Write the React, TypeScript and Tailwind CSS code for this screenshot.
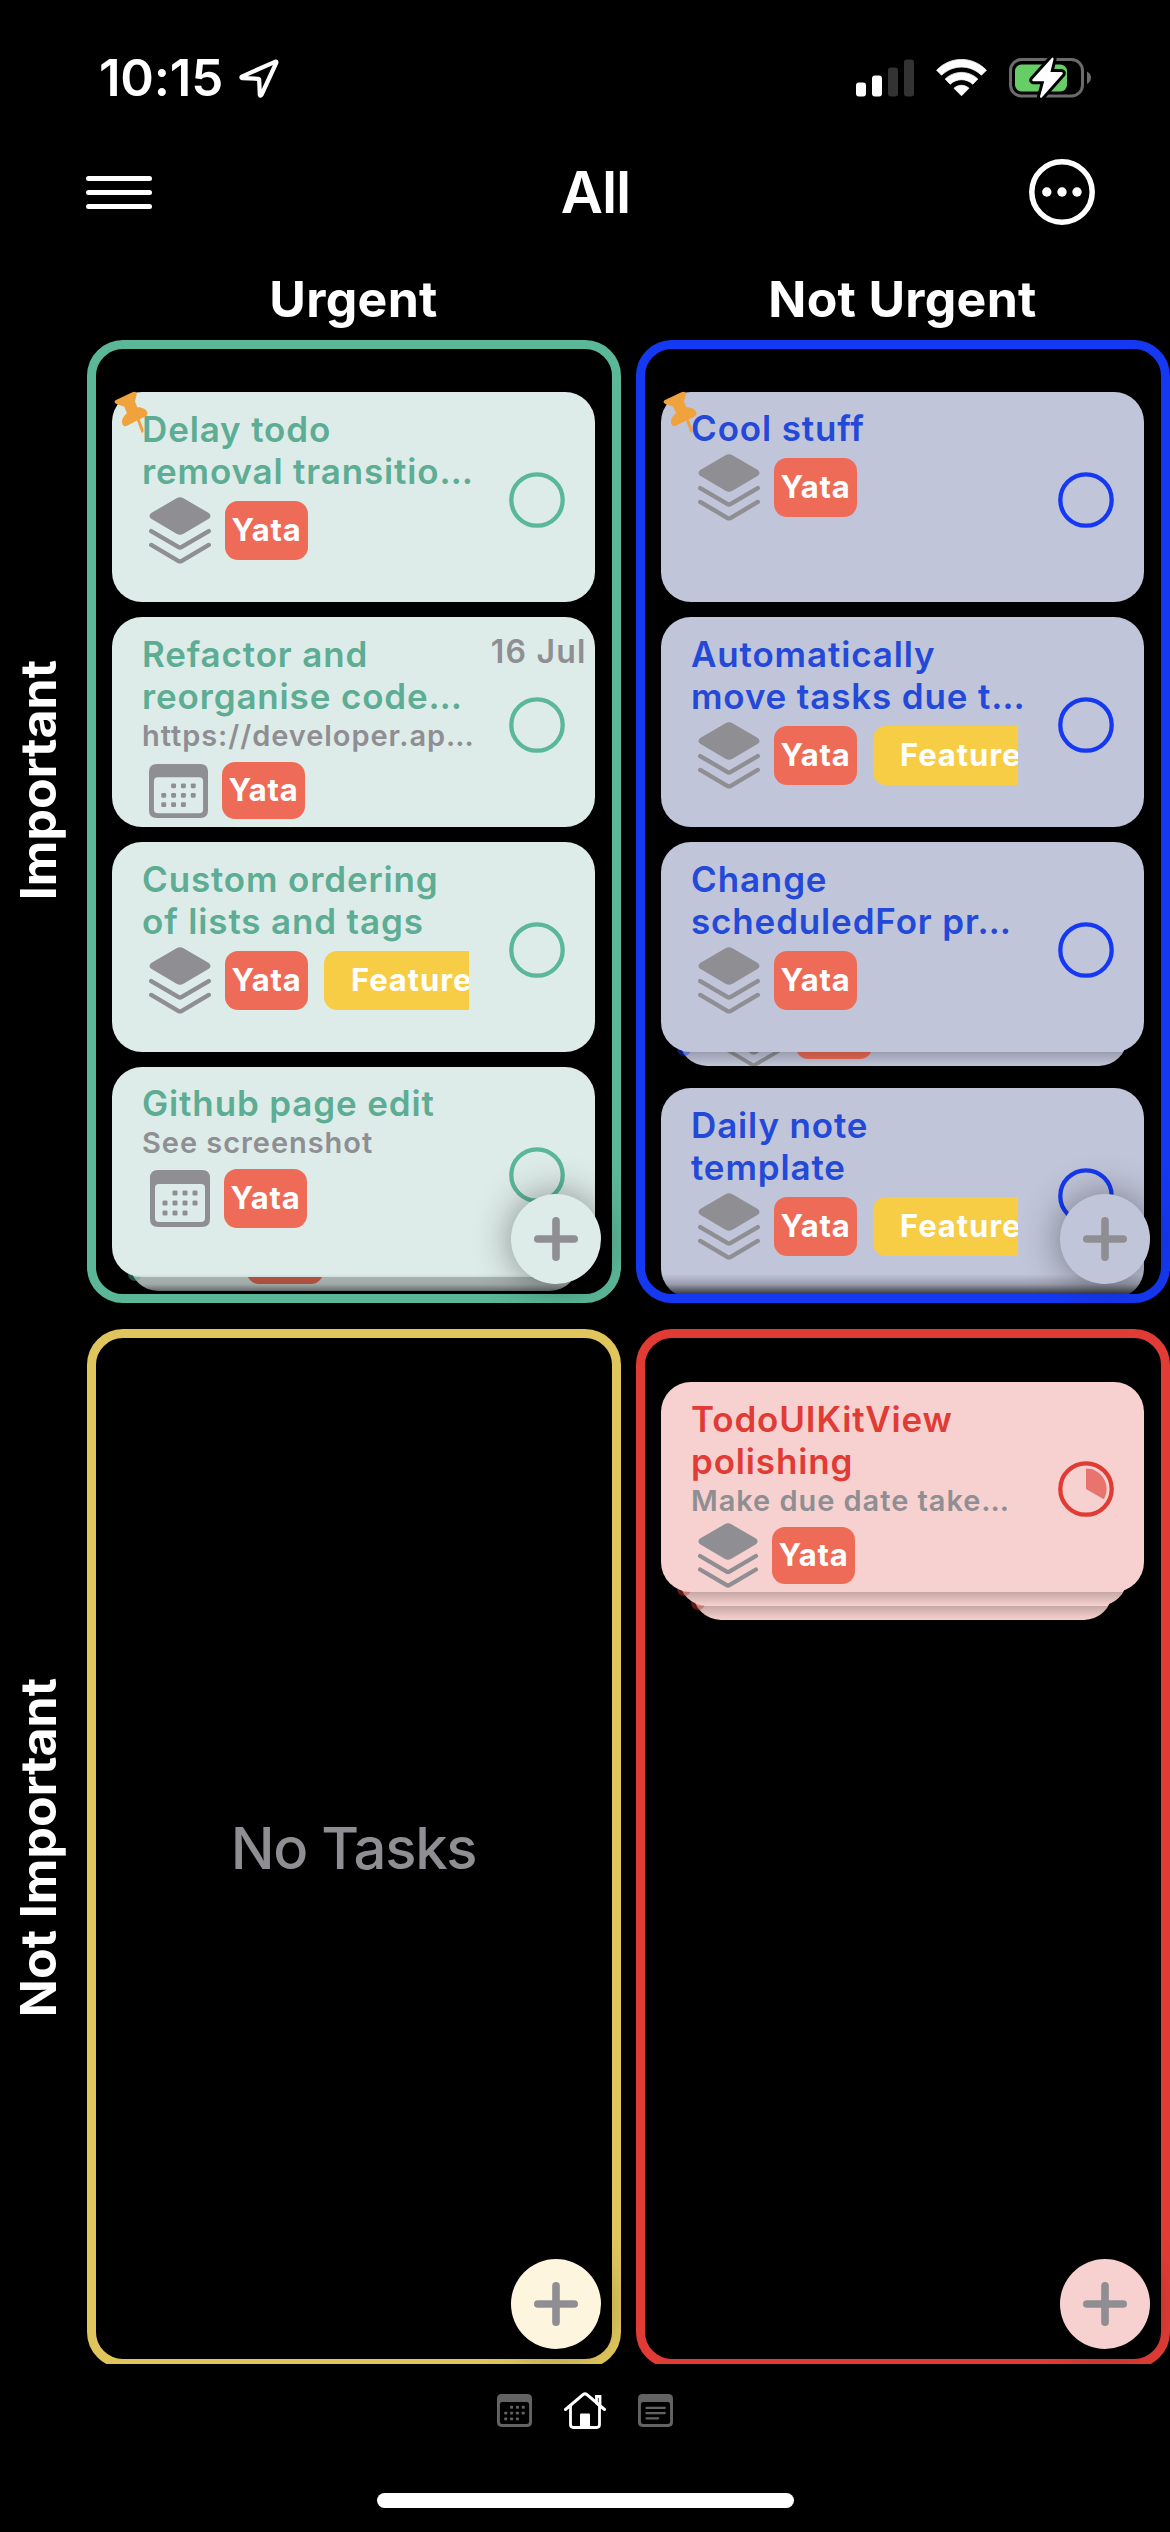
type Tone = "green" | "blue" | "red";
type Task = {
  title: string[];
  note?: string;
  due?: string;
  icon: "stack" | "calendar";
  compact?: boolean;
  feature?: boolean;
  pinned?: boolean;
  progress?: boolean;
  behind?: number;
};

const tones = {
  green: { card: "bg-[#deece9]", title: "text-[#5dad94]", ring: "#5ab797", dot: "bg-[#5ab797]" },
  blue: { card: "bg-[#c1c5d9]", title: "text-[#2349d8]", ring: "#1539f3", dot: "bg-[#1539f3]" },
  red: { card: "bg-[#f7d1cf]", title: "text-[#e03c35]", ring: "#e03c35", dot: "bg-[#c03c35]" },
};

function StackIcon({ small }: { small?: boolean }) {
  return (
    <svg viewBox="0 0 62 67.5" className={small ? "h-[65px] w-[60px] shrink-0" : "h-[67px] w-[62px] shrink-0"}>
      <path d="M27.5 1.2Q31-.9 34.500 1.200L60 16.200Q63.500 19 60 22L34.500 37Q31 39.100 27.500 37L2 22Q-1.500 19 2 16.200Z" fill="#8e8e93" />
      <path d="M2 34.300 29.600 50.500Q31 51.300 32.400 50.500L60 34.300M2 48.300 29.600 64.500Q31 65.300 32.400 64.500L60 48.300" fill="none" stroke="#8e8e93" strokeWidth="4.400" strokeLinecap="round" />
    </svg>
  );
}

function CalendarIcon({ className, color = "#8e8e93", lines }: { className: string; color?: string; lines?: boolean }) {
  const dots = [[25, 23], [35, 23], [45, 23], [15, 33], [25, 33], [35, 33], [45, 33], [15, 43], [25, 43], [35, 43]];
  return (
    <svg viewBox="0 0 60 57" preserveAspectRatio="none" className={className}>
      <path fillRule="evenodd" fill={color} d="M8 0H52Q60 0 60 8V49Q60 57 52 57H8Q0 57 0 49V8Q0 0 8 0ZM9 14Q5 14 5 18V48Q5 52 9 52H51Q55 52 55 48V18Q55 14 51 14Z" />
      {lines ? (
        <path d="M14.500 24H46M14.500 33H46M14.500 42H34.500" stroke={color} strokeWidth="3.800" strokeLinecap="round" />
      ) : (
        dots.map(([x, y]) => <rect key={`${x}-${y}`} x={x - 2.5} y={y - 2.5} width="5" height="5" rx="1.2" fill={color} />)
      )}
    </svg>
  );
}

function PinIcon() {
  return (
    <svg viewBox="0 0 38 44" className="absolute left-0 -top-[2px] h-[44px] w-[38px]">
      <path
        fill="#f0a33c"
        d="M3.500 10.200 19.800 2.400Q24.500 .4 24.800 4Q23.800 8 23 11.500L25.300 17.300C30 17 34.500 19.500 35.400 22.500Q36 25 33.500 26.400L27.600 29.200 31.500 39Q31.900 43.200 30 42.800L29.200 41.800 25 30.500 15.500 35.600Q12 37.300 10.500 34.500C9 30.500 11 26.500 15 23.200L12.300 16.800 5 14.200Q1 12.200 3.500 10.200Z"
      />
    </svg>
  );
}

function Tag({ kind, small }: { kind: "yata" | "feature"; small?: boolean }) {
  const height = small ? "h-[57px]" : "h-[59px]";
  if (kind === "feature") {
    return (
      <span className={`flex w-[170px] shrink-0 items-center rounded-[13px] bg-[#f7cd45] pl-[27px] text-[31px] font-bold tracking-[0.9px] text-white ${height}`}>
        Feature
      </span>
    );
  }
  return (
    <span className={`flex w-[83px] shrink-0 items-center justify-center rounded-[13px] bg-[#ed6b57] text-[31px] font-bold tracking-[0.8px] text-white ${height}`}>
      Yata
    </span>
  );
}

function Ring({ color, progress }: { color: string; progress?: boolean }) {
  return (
    <svg viewBox="0 0 56 56" className="absolute left-[396.500px] top-[79.500px] size-[56px]">
      <circle cx="28" cy="28" r="25.700" fill="none" stroke={color} strokeWidth="4.300" />
      {progress && <path d="M28 28V7.400A20.600 20.600 0 0 1 45.840 38.300Z" fill="#e87470" />}
    </svg>
  );
}

function BackCard({ tone, level, peek }: { tone: Tone; level: number; peek?: Task }) {
  const shape = level === 1 ? "left-[18px] right-[17px] -bottom-[14px]" : "left-[32px] right-[32px] -bottom-[28.500px]";
  return (
    <div className={`absolute h-[100px] ${shape}`}>
      <div className={`relative h-full overflow-hidden rounded-[28px] ${tones[tone].card}`}>
        {peek && (
          <div className="absolute bottom-[3px] left-[44px] flex items-end">
            {peek.icon === "stack" ? (
              <div className="h-[62px] w-[58px] origin-bottom scale-90">
                <StackIcon />
              </div>
            ) : (
              <div className="w-[58px]" />
            )}
            <span className="mb-[4px] ml-[15px] h-[53px] w-[76px] rounded-[12px] bg-[#ed6b57]" />
          </div>
        )}
        <div className="absolute inset-x-0 bottom-0 h-[14px] bg-gradient-to-b from-black/20 to-transparent" />
      </div>
      <div className={`absolute -left-[2px] bottom-[10px] size-[14px] rounded-full opacity-45 ${tones[tone].dot}`} />
    </div>
  );
}

function TaskCard({ task, tone }: { task: Task; tone: Tone }) {
  const t = tones[tone];
  const single = task.title.length === 1;
  const small = task.compact;
  return (
    <div className="relative h-[210px] w-full shrink-0">
      {task.behind === 2 && <BackCard tone={tone} level={2} />}
      {task.behind && <BackCard tone={tone} level={1} peek={tone === "red" ? undefined : task} />}
      <div className={`relative h-full overflow-hidden rounded-[30px] pl-[30px] ${single ? "pt-[15px]" : "pt-[16px]"} ${t.card}`}>
        <div className="w-[327px] whitespace-nowrap">
          {task.title.map((line) => (
            <div key={line} className={`h-[42px] text-[35px] leading-[42px] font-semibold tracking-[0.85px] ${t.title}`}>
              {line}
            </div>
          ))}
          {task.note && (
            <div className="mt-[2px] h-[34px] text-[29px] leading-[34px] font-semibold tracking-[0.950px] text-[#8e8e93]">{task.note}</div>
          )}
          <div className={`flex h-[67px] items-center overflow-hidden pl-[6.500px] ${task.note && !single ? "mt-[4px]" : "mt-[5px]"}`}>
            {task.icon === "stack" ? (
              <StackIcon small={small} />
            ) : (
              <CalendarIcon className={small ? "h-[54px] w-[59px] shrink-0" : "ml-px h-[57px] w-[60px] shrink-0"} />
            )}
            <div className="ml-[14.500px] flex gap-[16px]">
              <Tag kind="yata" small={small} />
              {task.feature && <Tag kind="feature" />}
            </div>
          </div>
        </div>
        {task.due && (
          <span className="absolute right-[8.500px] top-[15px] text-[32px] leading-[40px] font-semibold tracking-[1.200px] text-[#8e8e93]">{task.due}</span>
        )}
        <Ring color={t.ring} progress={task.progress} />
      </div>
      {task.pinned && <PinIcon />}
    </div>
  );
}

function AddButton({ color }: { color: string }) {
  return (
    <button className={`absolute right-[10.500px] bottom-[10.500px] flex size-[90px] items-center justify-center rounded-full shadow-[0_0_38px_rgba(0,0,0,0.42)] ${color}`}>
      <svg viewBox="0 0 44 44" className="size-[44px]">
        <path d="M22 3.800V40.200M3.800 22H40.200" stroke="#8e8e93" strokeWidth="7.600" strokeLinecap="round" />
      </svg>
    </button>
  );
}

function Quadrant({ border, add, tall, tasks, tone }: { border: string; add: string; tall?: boolean; tasks: Task[]; tone: Tone }) {
  return (
    <section className={`relative w-[534px] shrink-0 rounded-[36px] border-[9px] ${tall ? "h-[1039px]" : "h-[963.500px]"} ${border}`}>
      <div className="relative flex h-full flex-col overflow-hidden rounded-[27px]">
        {tasks.length === 0 ? (
          <div className="flex h-full items-center justify-center text-[58px] font-medium tracking-[-1.300px] text-[#8e8e93]">No Tasks</div>
        ) : (
          <div className="flex flex-col gap-[15px] px-[16.500px] pt-[43.500px]">
            {tasks.map((task) => (
              <div key={task.title[0]} className={task.behind === 1 ? "pb-[21px]" : ""}>
                <TaskCard task={task} tone={tone} />
              </div>
            ))}
          </div>
        )}
        {!tall && <div className="absolute inset-x-0 bottom-0 h-[20px] bg-gradient-to-b from-transparent via-black/20 to-black/70" />}
      </div>
      <AddButton color={add} />
    </section>
  );
}

const urgentImportant: Task[] = [
  { title: ["Delay todo", "removal transitio…"], icon: "stack", pinned: true },
  { title: ["Refactor and", "reorganise code…"], note: "https://developer.ap…", due: "16 Jul", icon: "calendar", compact: true },
  { title: ["Custom ordering", "of lists and tags"], icon: "stack", feature: true },
  { title: ["Github page edit"], note: "See screenshot", icon: "calendar", behind: 1 },
];
const laterImportant: Task[] = [
  { title: ["Cool stuff"], icon: "stack", pinned: true },
  { title: ["Automatically", "move tasks due t…"], icon: "stack", feature: true },
  { title: ["Change", "scheduledFor pr…"], icon: "stack", behind: 1 },
  { title: ["Daily note", "template"], icon: "stack", feature: true },
];
const laterMinor: Task[] = [
  { title: ["TodoUIKitView", "polishing"], note: "Make due date take…", icon: "stack", compact: true, progress: true, behind: 2 },
];

function StatusBar() {
  return (
    <div className="flex h-[132px] shrink-0 items-center justify-between pl-[99px] pr-[78px] pt-[24px]">
      <div className="flex items-center gap-[16px]">
        <span className="text-[51px] font-semibold tracking-[-0.200px]">10:15</span>
        <svg viewBox="0 0 40 39" className="h-[39px] w-[40px]">
          <path d="M36.500 2.600 2.800 17.600Q1.800 18.800 3.400 19.200L19.200 19.800Q20.200 20 20.200 21L20.800 35.800Q21.400 37.600 22.400 36L37.400 3.500Q37.600 2.300 36.500 2.600Z" fill="none" stroke="white" strokeWidth="4.200" strokeLinejoin="round" />
        </svg>
      </div>
      <div className="flex items-center">
        <svg viewBox="0 0 58 38" className="h-[38px] w-[58px]">
          <rect x="0" y="23.500" width="10" height="14" rx="3" fill="white" />
          <rect x="16" y="16.500" width="10" height="21" rx="3" fill="white" />
          <rect x="32" y="8.500" width="10" height="29" rx="3" fill="#333" />
          <rect x="48" y="0.500" width="10" height="37" rx="3" fill="#333" />
        </svg>
        <svg viewBox="0 0 51 38" className="ml-[22px] h-[38px] w-[51px]">
          <path d="M.6 11.200C14.500-3.200 36.500-3.200 50.400 11.200L45.400 16.200C34 5.300 17 5.300 5.600 16.200Z" fill="white" stroke="white" strokeWidth=".8" strokeLinejoin="round" />
          <path d="M9.200 20C18.500 11.200 32.500 11.200 41.800 20L36.800 25.200C30.500 19.200 20.500 19.200 14.200 25.200Z" fill="white" stroke="white" strokeWidth=".8" strokeLinejoin="round" />
          <path d="M18 29.200C22.500 25.300 28.500 25.300 33 29.200L25.500 36.800Z" fill="white" stroke="white" strokeWidth=".8" strokeLinejoin="round" />
        </svg>
        <svg viewBox="0 0 83 42" className="ml-[22px] h-[42px] w-[83px]">
          <rect x="1.500" y="2.500" width="72" height="36.500" rx="11" fill="none" stroke="#6b6b6b" strokeWidth="3" />
          <path d="M78 14.500Q82 16.500 82 20.500T78 27Z" fill="#6b6b6b" />
          <rect x="6" y="7.500" width="52" height="27" rx="6.500" fill="#67ce67" />
          <path d="M42.800 .9 23.400 22.500Q22.800 24 24.400 24.200H35.200L31 39.500Q31 41.500 33 40.200L53.600 17Q54.200 15.200 52.400 15H41.400L44.600 2Q44.400-.3 42.800 .9Z" fill="white" stroke="black" strokeWidth="6" strokeLinejoin="round" paintOrder="stroke" />
        </svg>
      </div>
    </div>
  );
}

export default function App() {
  return (
    <div className="flex h-[2532px] w-[1170px] flex-col overflow-hidden bg-black font-['Inter',sans-serif] text-white">
      <StatusBar />
      <header className="flex h-[120px] shrink-0 items-center justify-between pl-[86px] pr-[75px]">
        <div className="flex w-[66px] flex-col gap-[9px]">
          <span className="h-[5px] rounded-full bg-white" />
          <span className="h-[5px] rounded-full bg-white" />
          <span className="h-[5px] rounded-full bg-white" />
        </div>
        <h1 className="ml-[10px] text-[58px] font-semibold tracking-[-1px]">All</h1>
        <svg viewBox="0 0 66 66" className="size-[66px]">
          <circle cx="33" cy="33" r="30.200" fill="none" stroke="white" strokeWidth="5.500" />
          <circle cx="17.800" cy="33" r="4.700" fill="white" />
          <circle cx="33" cy="33" r="4.700" fill="white" />
          <circle cx="48" cy="33" r="4.700" fill="white" />
        </svg>
      </header>
      <div className="flex h-[87.500px] shrink-0 gap-[15px] pl-[86.500px] text-center text-[50px] leading-[60px] font-bold tracking-[0.3px]">
        <h2 className="w-[534px] pt-[17px]">Urgent</h2>
        <h2 className="w-[534px] pt-[17px]">Not Urgent</h2>
      </div>
      <main className="flex h-[2024.500px] shrink-0 overflow-hidden">
        <div className="flex w-[86.500px] shrink-0 flex-col text-[50px] leading-[60px] font-bold">
          <div className="flex h-[882px] shrink-0 items-center pl-[8px]">
            <span className="rotate-180 [writing-mode:vertical-rl]">Important</span>
          </div>
          <div className="flex h-[1253px] shrink-0 items-center pl-[8px]">
            <span className="rotate-180 [writing-mode:vertical-rl]">Not Important</span>
          </div>
        </div>
        <div className="flex flex-col gap-[26px]">
          <div className="flex gap-[15px]">
            <Quadrant border="border-[#5ab797]" add="bg-[#deece9]" tasks={urgentImportant} tone="green" />
            <Quadrant border="border-[#1539f3]" add="bg-[#c1c5d9]" tasks={laterImportant} tone="blue" />
          </div>
          <div className="flex gap-[15px]">
            <Quadrant border="border-[#dfc55c]" add="bg-[#fdf5dd]" tall tasks={[]} tone="green" />
            <Quadrant border="border-[#e03c35]" add="bg-[#f7d1cf]" tall tasks={laterMinor} tone="red" />
          </div>
        </div>
      </main>
      <nav className="flex h-[92px] shrink-0 items-center justify-center gap-[32px]">
        <CalendarIcon className="h-[33px] w-[35px]" color="#636363" />
        <svg viewBox="0 0 42 37" className="h-[37px] w-[42px]">
          <path d="M1.500 17.500 19.300 2.400Q21 1.200 22.700 2.400L40.500 17.500" fill="none" stroke="white" strokeWidth="3" strokeLinecap="round" strokeLinejoin="round" />
          <path d="M32.500 4.500H36V14L32.500 11ZM6.500 14V32.500Q6.500 35.500 9.500 35.500H32.500Q35.500 35.500 35.500 32.500V14" fill="none" stroke="white" strokeWidth="2.800" />
          <path d="M16 22.500Q16 21.500 17 21.500H25Q26 21.500 26 22.500V36H16Z" fill="white" />
        </svg>
        <CalendarIcon className="h-[33px] w-[35px]" color="#636363" lines />
      </nav>
      <div className="mx-auto mt-[37px] h-[15px] w-[417px] shrink-0 rounded-full bg-white" />
    </div>
  );
}
